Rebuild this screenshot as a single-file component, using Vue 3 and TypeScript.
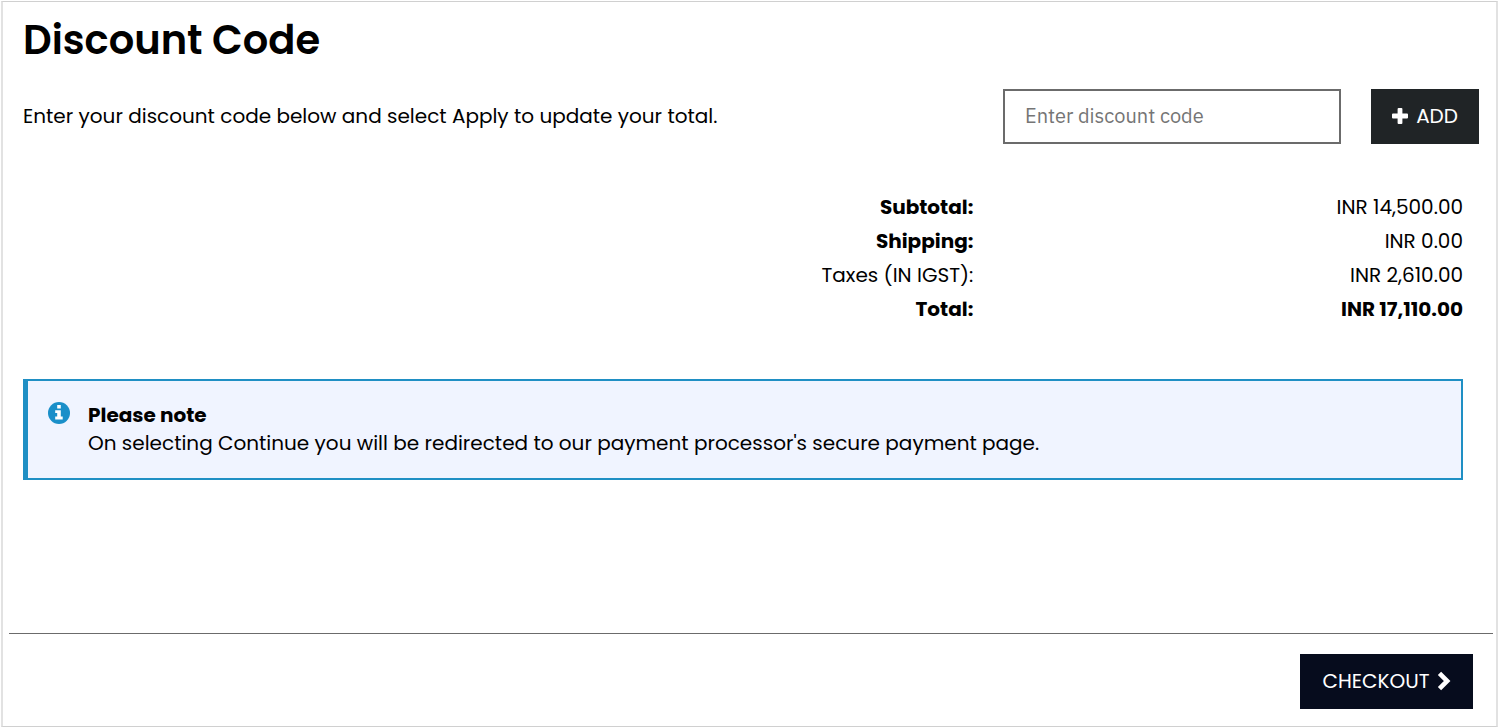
<script setup lang="ts">
import { ref } from 'vue'

interface SummaryRow {
  label: string
  amount: string
  strongLabel: boolean
  strongAmount: boolean
}

const code = ref('')

const rows: SummaryRow[] = [
  { label: 'Subtotal:', amount: 'INR 14,500.00', strongLabel: true, strongAmount: false },
  { label: 'Shipping:', amount: 'INR 0.00', strongLabel: true, strongAmount: false },
  { label: 'Taxes (IN IGST):', amount: 'INR 2,610.00', strongLabel: false, strongAmount: false },
  { label: 'Total:', amount: 'INR 17,110.00', strongLabel: true, strongAmount: true },
]
</script>

<template>
  <main class="panel">
    <section class="content">
      <h1 class="title">Discount Code</h1>

      <form class="discount" @submit.prevent>
        <label class="hint" for="discount-code">
          Enter your discount code below and select Apply to update your total.
        </label>
        <input
          id="discount-code"
          v-model="code"
          class="field"
          type="text"
          placeholder="Enter discount code"
        />
        <button class="button add" type="submit">
          <svg class="plus" viewBox="0 0 16 16" aria-hidden="true">
            <path
              d="M6.5 0h3Q10.400 0 10.400 1v4.600H15q1 0 1 1v2.800q0 1-1 1h-4.600V15q0 1-1 1H6.600q-1 0-1-1v-4.600H1q-1 0-1-1V6.600q0-1 1-1h4.600V1q0-1 1-1z"
            />
          </svg>
          <span>ADD</span>
        </button>
      </form>

      <table class="summary">
        <tbody>
          <tr v-for="row in rows" :key="row.label">
            <th scope="row" :class="{ strong: row.strongLabel }">{{ row.label }}</th>
            <td :class="{ strong: row.strongAmount }">{{ row.amount }}</td>
          </tr>
        </tbody>
      </table>

      <aside class="note">
        <svg class="info" viewBox="0 0 22 22" aria-hidden="true">
          <circle cx="11" cy="11" r="11" fill="#1a8fc9" />
          <path
            fill="#fff"
            d="M9.200 3h3.600v3.600H9.200zM7.200 8.200h5.600v6.400h1.900v3H7.200v-3h2v-3.500h-2z"
          />
        </svg>
        <div>
          <strong class="note-title">Please note</strong>
          <p class="note-text">
            On selecting Continue you will be redirected to our payment processor's secure payment page.
          </p>
        </div>
      </aside>
    </section>

    <footer class="footer">
      <button class="button checkout" type="button">
        <span>CHECKOUT</span>
        <svg class="chevron" viewBox="0 0 14 20" aria-hidden="true">
          <path d="M2.500 2.300l7.700 7.700-7.700 7.700" fill="none" stroke="#fff" stroke-width="4.600" />
        </svg>
      </button>
    </footer>
  </main>
</template>

<style>
body {
  background: #fff;
}
</style>

<style scoped>
.panel {
  box-sizing: border-box;
  display: flex;
  flex-direction: column;
  min-height: calc(100vh - 2px);
  margin: 1px 0 0 1px;
  border: solid;
  border-width: 1px 2px;
  border-color: #d0d0d0 #e2e2e2;
  color: #000;
  font-family: Poppins, Inter, "Open Sans", sans-serif;
  font-size: 20px;
  line-height: 28px;
}

.content {
  flex: 1;
  padding: 12px 17px 20px 20px;
}

.title {
  margin: 0;
  font-size: 40px;
  font-weight: 600;
  line-height: 52px;
}

.discount {
  display: flex;
  align-items: center;
  margin-top: 23px;
}

.hint {
  flex: 1;
  padding-bottom: 2px;
}

.field {
  box-sizing: border-box;
  width: 338px;
  height: 55px;
  margin-right: 30px;
  padding: 0 20px 2px;
  border: 2px solid #6b6b6b;
  border-radius: 0;
  background: #fff;
  color: #000;
  font-family: "IBM Plex Sans", Roboto, sans-serif;
  font-size: 20px;
}

.field::placeholder {
  color: #757575;
  opacity: 1;
}

.button {
  display: flex;
  align-items: center;
  justify-content: center;
  height: 55px;
  padding: 0 22px 2px;
  border: 0;
  color: #fff;
  font: inherit;
  cursor: pointer;
}

.add {
  gap: 8px;
  width: 108px;
  background: #202426;
}

.plus {
  width: 16px;
  height: 16px;
  flex: none;
  fill: #fff;
}

.summary {
  width: calc(100% - 16px);
  margin-top: 46px;
  border-collapse: collapse;
  table-layout: fixed;
}

.summary th,
.summary td {
  padding: 0;
  font-weight: 400;
  line-height: 34px;
  text-align: right;
}

.summary th {
  width: 66%;
}

.summary .strong {
  font-weight: 700;
}

.note {
  display: flex;
  gap: 18px;
  margin: 53px 16px 0 0;
  padding: 20px 20px 21px;
  border: 2px solid #1f8fc4;
  border-left-width: 5px;
  background: #f0f4ff;
}

.info {
  flex: none;
  width: 22px;
  height: 22px;
  margin-top: 1px;
}

.note-title {
  display: block;
  font-weight: 700;
}

.note-text {
  margin: 0;
}

.footer {
  display: flex;
  justify-content: flex-end;
  margin: 0 3px 0 6px;
  padding: 20px 20px 17px;
  border-top: 1px solid #6b6b6b;
}

.checkout {
  gap: 7px;
  width: 173px;
  background: #060c1d;
}

.chevron {
  width: 14px;
  height: 20px;
  flex: none;
}
</style>
